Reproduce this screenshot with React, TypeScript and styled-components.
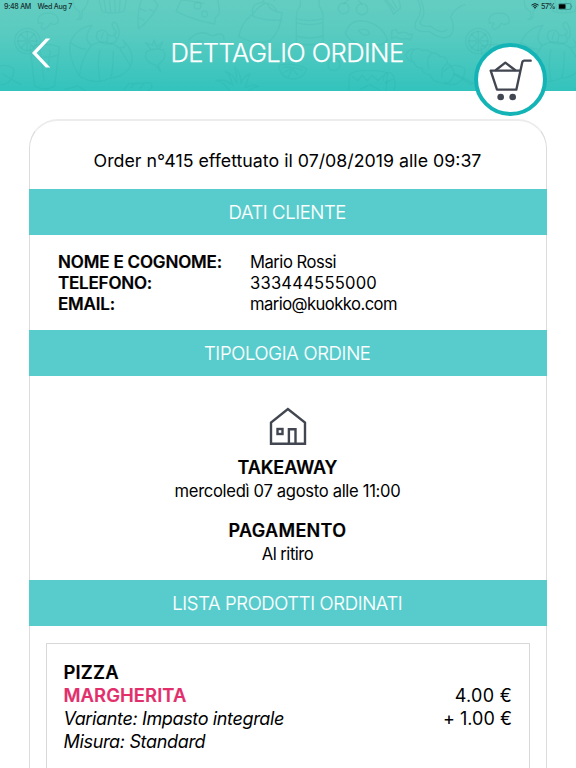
import React from "react";
import styled, { createGlobalStyle } from "styled-components";

const teal = "#58cccc";
const ink = "#414651";

const GlobalStyle = createGlobalStyle`
  *, *::before, *::after { box-sizing: border-box; }
  body {
    margin: 0;
    background: #fff;
    color: #000;
    font-family: Inter, "Liberation Sans", sans-serif;
    overflow: hidden;
  }
`;

const Page = styled.div`
  width: 576px;
  height: 768px;
  overflow: hidden;
  display: flex;
  flex-direction: column;
  background: #fff;
`;

const Header = styled.header`
  position: relative;
  flex: none;
  height: 91px;
  background: linear-gradient(#64cdc1 0%, #5acbc0 35%, #33c3bd 100%);
`;

const Doodles = styled.svg`
  position: absolute;
  inset: 0;
  width: 576px;
  height: 91px;
  fill: none;
  stroke: #168e92;
  stroke-opacity: 0.09;
  stroke-width: 4;
  stroke-linecap: round;
  stroke-linejoin: round;
`;

const StatusBar = styled.div`
  position: relative;
  display: flex;
  align-items: center;
  height: 12px;
  padding: 0 4px;
  font-size: 7.1px;
  font-weight: 500;
  color: #16302f;
`;

const StatusItem = styled.span<{ $tracking?: number; $gap?: number }>`
  letter-spacing: ${(p) => p.$tracking ?? 0}px;
  margin-right: ${(p) => p.$gap ?? 0}px;
  white-space: nowrap;
`;

const StatusRight = styled.div`
  display: flex;
  align-items: center;
  margin-left: auto;
`;

const WifiIcon = styled.svg`
  width: 8px;
  height: 6px;
  margin-right: 2.5px;
`;

const BatteryIcon = styled.svg`
  width: 15px;
  height: 7px;
  margin-right: -1px;
`;

const TitleBar = styled.div`
  position: relative;
  display: grid;
  grid-template-columns: 60px 1fr 60px;
  align-items: center;
  height: 81px;
`;

const BackButton = styled.button`
  display: flex;
  justify-content: flex-end;
  width: 51px;
  padding: 0;
  border: 0;
  background: none;
`;

const Title = styled.h1`
  margin: 0;
  padding-right: 2px;
  text-align: center;
  font-size: 25.6px;
  line-height: 32px;
  font-weight: 300;
  letter-spacing: -0.6px;
  color: #fff;
  -webkit-text-stroke: 0.25px #fff;
`;

const CartButton = styled.button`
  position: absolute;
  left: 474px;
  top: 43px;
  width: 73px;
  height: 73px;
  padding: 0;
  display: flex;
  border: 4px solid #14b4b6;
  border-radius: 50%;
  background: #fff;
`;

const Card = styled.main`
  flex: 1 0 auto;
  display: flex;
  flex-direction: column;
  margin: 28px 29px 0;
  height: 700px;
  border: 1px solid #dcdcdc;
  border-top: 2px solid #ececec;
  border-radius: 29px 29px 0 0;
`;

const OrderLine = styled.p`
  margin: 0;
  height: 68px;
  padding: 12px 1px 0 0;
  display: flex;
  align-items: center;
  justify-content: center;
  font-size: 17.8px;
  line-height: 24px;
`;

const Band = styled.h2<{ $tracking: number }>`
  flex: none;
  margin: 0 -1px;
  padding-right: 1.5px;
  height: 46px;
  display: flex;
  align-items: center;
  justify-content: center;
  background: ${teal};
  color: #fff;
  font-size: 18.5px;
  font-weight: 300;
  letter-spacing: ${(p) => p.$tracking}px;
  -webkit-text-stroke: 0.15px #fff;
`;

const Customer = styled.dl`
  flex: none;
  margin: 0;
  height: 95px;
  padding: 17px 0 0 28px;
  display: grid;
  grid-template-columns: 192px 1fr;
  grid-auto-rows: 21px;
  line-height: 21px;
`;

const Label = styled.dt<{ $tracking: number }>`
  font-size: 17px;
  font-weight: 600;
  letter-spacing: ${(p) => p.$tracking}px;
  -webkit-text-stroke: 0.2px #000;
`;

const Value = styled.dd<{ $tracking: number }>`
  margin: 0;
  font-size: 16.6px;
  letter-spacing: ${(p) => p.$tracking}px;
`;

const Delivery = styled.section`
  flex: none;
  height: 204px;
  display: flex;
  flex-direction: column;
  align-items: center;
  padding-top: 31px;
`;

const HouseIcon = styled.svg`
  flex: none;
  width: 38px;
  height: 38px;
  margin-bottom: 12px;
  fill: none;
  stroke: ${ink};
  stroke-width: 2.4;
`;

const Detail = styled.div`
  text-align: center;
  margin-bottom: 18px;
  padding-right: 1px;
`;

const DetailTitle = styled.h3<{ $tracking: number }>`
  margin: 0;
  font-size: 18px;
  line-height: 22.5px;
  font-weight: 600;
  letter-spacing: ${(p) => p.$tracking}px;
  -webkit-text-stroke: 0.2px #000;
`;

const DetailText = styled.p<{ $tracking: number }>`
  margin: 0;
  font-size: 16.6px;
  line-height: 22.5px;
  letter-spacing: ${(p) => p.$tracking}px;
`;

const Product = styled.article`
  flex: 1;
  margin: 17px 16px 0;
  padding: 17px 17px 0 16.5px;
  border: 1px solid #d8d8d8;
`;

const ProductRow = styled.div`
  display: flex;
  justify-content: space-between;
  height: 23px;
  line-height: 23px;
  white-space: nowrap;
`;

const ProductName = styled.span<{ $accent?: boolean; $tracking: number }>`
  font-size: 18.4px;
  font-weight: 600;
  color: ${(p) => (p.$accent ? "#e22f6c" : "#000")};
  letter-spacing: ${(p) => p.$tracking}px;
  -webkit-text-stroke: 0.2px currentColor;
`;

const Option = styled.span<{ $tracking: number }>`
  font-size: 18px;
  font-style: italic;
  letter-spacing: ${(p) => p.$tracking}px;
`;

const Price = styled.span<{ $tracking: number }>`
  font-size: 18px;
  letter-spacing: ${(p) => p.$tracking}px;
`;

function FoodPattern() {
  return (
    <Doodles viewBox="0 0 1728 273" aria-hidden="true">
      <defs>
        <g id="food">
          {/* citrus slice on a glass */}
          <circle cx="82" cy="123" r="38" />
          <circle cx="82" cy="123" r="29" />
          <path d="M82 94v58M53 123h58M62 103l41 41M62 144l41-41" />
          <path d="M90 140l14 118q32 18 60 0l14-118q-44-14-88 0zM96 165q40 14 80 0M120 150l12 90M150 152l-6 60" />
          {/* mushroom */}
          <path d="M115 70q-6-28 28-31 34 0 32 28-12 12-24 2-4 12-20 20-14-8-2-18-8-6-14-1z" />
          {/* croissant */}
          <path d="M238 228q-34-52-28-100 20-46 66-52-30 40-2 60 40-24 84 8 30-2 10-24 40 38 24 78-20 34-60 36-46 24-94-6zM274 136q-30 40-36 92M300 150q-10 40 0 94M340 155q0 50-8 79M358 144l34 54M210 128q30 20 48 20" />
          {/* shrimp */}
          <path d="M292 96q22-14 32 8 18 10 26-8-14-12-14-24 10-12 16 4 14 28-6 50-24 14-48-2-14-10-6-28zM309 99l-5 17M324 104l-4 22M342 100l8 20" />
          {/* chicken leg */}
          <path d="M222-10q-8 34 16 44 6 24-8 24 20 6 16-24 22-22 18-50" />
          {/* cupcake */}
          <path d="M296-4l10 38q32 10 66 0l8-38M312 0l6 34M328 0l4 36M344 0l2 36M360 0l-2 34" />
          {/* carrot */}
          <path d="M425-4q-16 50-9 90 36-26 58-70-10-20-28-24M420 26l18 8M418 54l14 6M448 28l14 8" />
          {/* radish */}
          <path d="M440 155q18-12 48-6 18 22-14 46l8 20-16-20q-40-12-26-40zM454 150l-18-22 22 8 4-16 8 22 18-16-10 22" />
          {/* cheese */}
          <path d="M528 34l18-40M528 34q52 26 116 38l2-20q12-6 12-18l-4-34M532-4l80 14" />
          <circle cx="593" cy="17" r="10" />
          <circle cx="614" cy="42" r="9" />
          {/* apple halves */}
          <path d="M566 120q34-36 70-12 36-16 36 10M580 136q10-18 28-12M-20 214q24-30 60-10 6 32-24 48-20 6-36-6M8 222l54 32" />
          {/* tomato pot */}
          <path d="M716 110q8-42 40-66 40-46 48-28 12 20 42 22-4 56-36 84-38 12-70-2zM752 44q30 20 94 16M760 46q-10-30 20-38 40-2 50 26M788 6q14-24 36-4" />
          {/* bottle */}
          <path d="M946-4v22q-12 16-12 34v76q38 14 80 0V52q0-20-12-34V-4M934 56q40 12 80 0M934 68q40 12 80 0M934 108q40 12 80 0" transform="translate(-45 0)" />
          {/* cherries */}
          <circle cx="1031" cy="25" r="16" />
          <circle cx="1086" cy="28" r="17" />
          <path d="M1031 12l24-22M1086 14l-18-24" />
          {/* doughnut */}
          <path d="M1036 100q14-46 62-36 50 12 64 56-16 20-34 14-20 14-42 0-36-6-50-34zM1075 92q24-12 34 8-14 14-34-8z" />
          {/* pineapple */}
          <path d="M690 276q-20-34-42-34 28-8 50 14-8-34-22-42 26 10 34 34 0-30-6-46 20 20 18 46 12-22 28-26-10 20-14 40 22-10 40-4-28 8-36 22" />
          {/* half lemon */}
          <path d="M836 196q44-10 84 10-10 36-50 30-30-6-34-40zM850 202q28-4 56 8M876 204l-10 26M876 204l16 20M876 204l-26 14" />
          {/* sushi */}
          <path d="M1048 226q8-16 60-14 48 0 54 8l-4 58M1048 226l-2 52M1056 230l18 12 12-16 16 16 14-16 18 16 14-14" />
          <circle cx="1002" cy="194" r="18" />
          {/* fries */}
          <path d="M1150-4q20 20 30 46l22-18-6-30M1160 0l24 30M1174-4l16 28" />
          {/* steak */}
          <path d="M1250-4q24 34-2 68-14 36 40 30 42 32 64 12 16-18 0-56 14-28 42-36M1262 0q20 40-2 66 0 16 30 12 40 28 50 10" />
          {/* candy */}
          <path d="M1176 92l12-4 6 12q24-8 32 4l12-2-6 18-14-4q-20 4-30-6l-14 6z" />
          {/* kebab */}
          <path d="M1218 164q10-20 26-16 10-6 24 4 14-6 28 8 14-4 24 10 22-2 22 20 22 12 20 36-14 36-48 20-18-4-24-22-22 0-24-20-20 0-24-18-22-2-24-22zM1362 220l60 30M1244 148q-18 14-8 36M1296 160q-20 16-10 44M1342 190q-20 12-16 42" />
          {/* pie slice */}
          <path d="M372 268l14-16 66-4 4 14-14 14M394 262l12-12M420 266l12-16M194 268l40-10 22 14M1080 268l30-14 28 16" />
          {/* sprout */}
          <path d="M1150 240q0-26 22-22 20 18 10 54M1156 248l22-10" />
        </g>
      </defs>
      <use href="#food" />
      <use href="#food" x="1353" />
    </Doodles>
  );
}

const customer = [
  { label: "NOME E COGNOME:", lt: -0.17, value: "Mario Rossi", vt: -0.48 },
  { label: "TELEFONO:", lt: -0.2, value: "333444555000", vt: 0.2 },
  { label: "EMAIL:", lt: -0.2, value: "mario@kuokko.com", vt: -0.55 },
];

export default function App() {
  return (
    <>
      <GlobalStyle />
      <Page>
        <Header>
          <FoodPattern />
          <StatusBar>
            <StatusItem $tracking={-0.3} $gap={6.5}>9:48 AM</StatusItem>
            <StatusItem $tracking={-0.25}>Wed Aug 7</StatusItem>
            <StatusRight>
              <WifiIcon viewBox="0 0 16 12" fill="none" stroke="#0b2021" strokeWidth="2">
                <path d="M1 4.2q7-6 14 0M3.6 7q4.4-3.6 8.800 0" />
                <path d="M8 11.5l-2.6-2.7q2.6-1.8 5.2 0z" fill="#0b2021" stroke="none" />
              </WifiIcon>
              <StatusItem $tracking={-0.5} $gap={3}>57%</StatusItem>
              <BatteryIcon viewBox="0 0 15 7">
                <rect x="0.4" y="0.6" width="12.6" height="5.8" rx="1.5" fill="none" stroke="#2a7775" strokeWidth="0.6" />
                <rect x="1" y="1.2" width="6.5" height="4.6" rx="0.5" fill="#000" />
                <path d="M13.7 2.5q1.2 1 0 2z" fill="#2a7775" />
              </BatteryIcon>
            </StatusRight>
          </StatusBar>
          <TitleBar>
            <BackButton aria-label="Indietro">
              <svg width="20" height="30" viewBox="31 37.5 20 30" fill="#fff">
                <path d="M45.8 38H50.3L36.6 52.5L50.3 67H45.8L32 52.5Z" />
              </svg>
            </BackButton>
            <Title>DETTAGLIO ORDINE</Title>
          </TitleBar>
          <CartButton aria-label="Carrello">
            <svg width="65" height="65" viewBox="39 36 195 195" fill="none" stroke={ink} strokeWidth="7" strokeLinecap="round" strokeLinejoin="round">
              <path d="M197 77H178Q173 77 171.5 83L154 164H96L77 107H165" />
              <path d="M93 105L121 83L150 105" />
              <circle cx="107" cy="186" r="10" fill={ink} stroke="none" />
              <circle cx="143" cy="186" r="10" fill={ink} stroke="none" />
            </svg>
          </CartButton>
        </Header>

        <Card>
          <OrderLine>Order n°415 effettuato il 07/08/2019 alle 09:37</OrderLine>

          <Band $tracking={-0.39}>DATI CLIENTE</Band>
          <Customer>
            {customer.map((row) => (
              <React.Fragment key={row.label}>
                <Label $tracking={row.lt}>{row.label}</Label>
                <Value $tracking={row.vt}>{row.value}</Value>
              </React.Fragment>
            ))}
          </Customer>

          <Band $tracking={-0.3}>TIPOLOGIA ORDINE</Band>
          <Delivery>
            <HouseIcon viewBox="269.5 407 38 38">
              <path d="M271.5 443.7V422.5L288.400 409L305.500 422.5V443.7Z" />
              <rect x="278" y="429" width="5" height="5" />
              <path d="M289.4 443.7V429.2H296V443.7" />
            </HouseIcon>
            <Detail>
              <DetailTitle $tracking={-0.1}>TAKEAWAY</DetailTitle>
              <DetailText $tracking={-0.32}>mercoledì 07 agosto alle 11:00</DetailText>
            </Detail>
            <Detail>
              <DetailTitle $tracking={0.32}>PAGAMENTO</DetailTitle>
              <DetailText $tracking={-0.5}>Al ritiro</DetailText>
            </Detail>
          </Delivery>

          <Band $tracking={-0.34}>LISTA PRODOTTI ORDINATI</Band>
          <Product>
            <ProductRow>
              <ProductName $tracking={0.19}>PIZZA</ProductName>
            </ProductRow>
            <ProductRow>
              <ProductName $accent $tracking={0.1}>MARGHERITA</ProductName>
              <Price $tracking={0.3}>4.00 €</Price>
            </ProductRow>
            <ProductRow>
              <Option $tracking={-0.36}>Variante: Impasto integrale</Option>
              <Price $tracking={0.03}>+ 1.00 €</Price>
            </ProductRow>
            <ProductRow>
              <Option $tracking={-0.33}>Misura: Standard</Option>
            </ProductRow>
          </Product>
        </Card>
      </Page>
    </>
  );
}
